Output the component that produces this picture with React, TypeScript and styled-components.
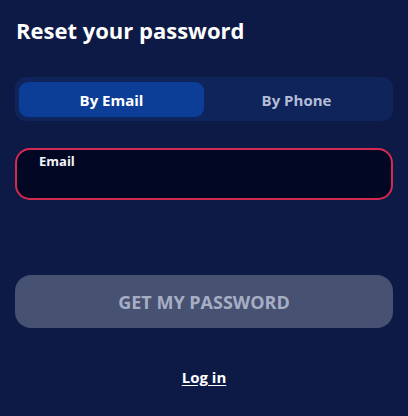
import React, { useState } from 'react';
import styled, { createGlobalStyle } from 'styled-components';

const GlobalStyle = createGlobalStyle`
    html, body {
        margin: 0;
        padding: 0;
        background: #0e1a46;
    }
    body {
        font-family: "Open Sans", "Noto Sans", sans-serif;
        color: #ffffff;
    }
`;

const Page = styled.div`
    width: 408px;
    height: 416px;
    box-sizing: border-box;
    padding: 15px 15px 0 15px;
    display: flex;
    flex-direction: column;
`;

const Title = styled.h1`
    margin: 0 0 0 1px;
    font-size: 22px;
    line-height: 30px;
    font-weight: 700;
    color: #ffffff;
`;

const Tabs = styled.div`
    margin-top: 32px;
    height: 44px;
    box-sizing: border-box;
    padding: 5px 4px 4px;
    display: grid;
    grid-template-columns: 1fr 1fr;
    background: #10245c;
    border-radius: 11px;
`;

const Tab = styled.button<{ $active: boolean }>`
    border: none;
    border-radius: 9px;
    font-family: inherit;
    font-size: 15px;
    font-weight: 700;
    cursor: pointer;
    background: ${(p) => (p.$active ? '#0c3e98' : 'transparent')};
    color: ${(p) => (p.$active ? '#ffffff' : '#b4bdd6')};
`;

const Field = styled.label`
    margin-top: 27px;
    height: 52px;
    box-sizing: border-box;
    border: 2px solid #d42a52;
    border-radius: 15px;
    background: #020824;
    padding: 2px 22px 0;
    display: flex;
    flex-direction: column;
`;

const FieldLabel = styled.span`
    font-size: 13px;
    line-height: 18px;
    font-weight: 700;
    color: #f2f4fa;
`;

const FieldInput = styled.input`
    border: none;
    outline: none;
    background: transparent;
    color: #ffffff;
    font-family: inherit;
    font-size: 15px;
    padding: 0;
    height: 24px;
`;

const Submit = styled.button`
    margin-top: 75px;
    height: 53px;
    border: none;
    border-radius: 16px;
    background: #475172;
    color: #a6aec4;
    font-family: inherit;
    font-size: 18px;
    font-weight: 700;
`;

const LoginLink = styled.a`
    align-self: center;
    margin-top: 39px;
    font-size: 15px;
    line-height: 20px;
    font-weight: 700;
    color: #ffffff;
    text-decoration: underline;
    text-underline-offset: 2px;
    cursor: pointer;
`;

const App: React.FC = () => {
    const [mode, setMode] = useState<'email' | 'phone'>('email');

    return (
        <>
            <GlobalStyle />
            <Page>
                <Title>Reset your password</Title>
                <Tabs>
                    <Tab $active={mode === 'email'} onClick={() => setMode('email')}>
                        By Email
                    </Tab>
                    <Tab $active={mode === 'phone'} onClick={() => setMode('phone')}>
                        By Phone
                    </Tab>
                </Tabs>
                <Field>
                    <FieldLabel>{mode === 'email' ? 'Email' : 'Phone'}</FieldLabel>
                    <FieldInput type={mode === 'email' ? 'email' : 'tel'} />
                </Field>
                <Submit disabled>GET MY PASSWORD</Submit>
                <LoginLink>Log in</LoginLink>
            </Page>
        </>
    );
};

export default App;
